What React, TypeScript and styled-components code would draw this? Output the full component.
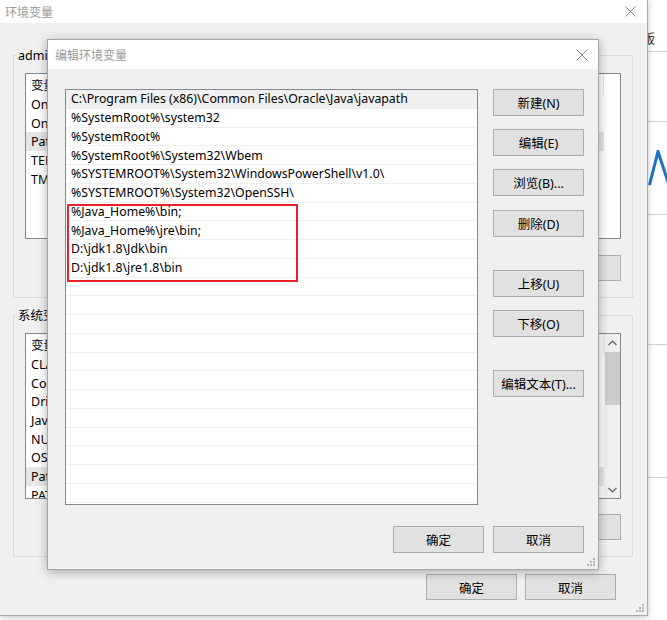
import React from "react";
import styled, { createGlobalStyle } from "styled-components";

// Data --------------------------------------------------------------------------

const pathEntries: string[] = [
  "C:\\Program Files (x86)\\Common Files\\Oracle\\Java\\javapath",
  "%SystemRoot%\\system32",
  "%SystemRoot%",
  "%SystemRoot%\\System32\\Wbem",
  "%SYSTEMROOT%\\System32\\WindowsPowerShell\\v1.0\\",
  "%SYSTEMROOT%\\System32\\OpenSSH\\",
  "%Java_Home%\\bin;",
  "%Java_Home%\\jre\\bin;",
  "D:\\jdk1.8\\Jdk\\bin",
  "D:\\jdk1.8\\jre1.8\\bin",
];

const userVars = [
  { name: "OneDrive", value: "C:\\Users\\admin\\OneDrive" },
  { name: "OneDriveConsumer", value: "C:\\Users\\admin\\OneDrive" },
  { name: "Path", value: "%USERPROFILE%\\AppData\\Local\\Microsoft" },
  { name: "TEMP", value: "%USERPROFILE%\\AppData\\Local\\Temp" },
  { name: "TMP", value: "%USERPROFILE%\\AppData\\Local\\Temp" },
];

const systemVars = [
  { name: "CLASSPATH", value: ".;%Java_Home%\\bin;" },
  { name: "ComSpec", value: "C:\\Windows\\system32\\cmd.exe" },
  { name: "DriverData", value: "C:\\Windows\\System32\\Drivers" },
  { name: "Java_Home", value: "D:\\jdk1.8\\Jdk" },
  { name: "NUMBER_OF_PROCESSORS", value: "8" },
  { name: "OS", value: "Windows_NT" },
  { name: "Path", value: "C:\\Program Files (x86)\\Common Files" },
  { name: "PATHEXT", value: ".COM;.EXE;.BAT;.CMD;.VBS" },
  { name: "PROCESSOR_ARCHITECTURE", value: "AMD64" },
];

// Icons -------------------------------------------------------------------------

const CloseIcon: React.FC<{ size: number }> = ({ size }) => (
  <svg width={size} height={size} viewBox={`0 0 ${size} ${size}`}>
    <path
      d={`M0.5 0.5 L${size - 0.5} ${size - 0.5} M${size - 0.5} 0.5 L0.5 ${size - 0.5}`}
      stroke="#8a8a8a"
      strokeWidth="1"
      fill="none"
    />
  </svg>
);

const Grip: React.FC = () => (
  <svg width="8" height="8" viewBox="0 0 8 8">
    {[
      [6, 0],
      [3, 3],
      [6, 3],
      [0, 6],
      [3, 6],
      [6, 6],
    ].map(([x, y]) => (
      <rect key={`${x}-${y}`} x={x} y={y} width="2" height="2" fill="#b4b4b4" />
    ))}
  </svg>
);

const Chevron: React.FC<{ up?: boolean }> = ({ up }) => (
  <svg width="9" height="6" viewBox="0 0 9 6">
    <polyline
      points={up ? "0.5,5 4.5,1 8.5,5" : "0.5,1 4.5,5 8.5,1"}
      stroke="#606060"
      strokeWidth="1.2"
      fill="none"
    />
  </svg>
);

// Component ---------------------------------------------------------------------

const VarList: React.FC<{
  rows: { name: string; value: string }[];
  selected: number;
  scroll?: boolean;
}> = ({ rows, selected, scroll }) => (
  <ListView>
    <ListBody>
      <HeaderRow>
        <NameCell>变量</NameCell>
        <ValueCell $header>值</ValueCell>
      </HeaderRow>
      {rows.map((row, i) => (
        <VarRow key={row.name + i} $selected={i === selected}>
          <NameCell>{row.name}</NameCell>
          <ValueCell>{row.value}</ValueCell>
        </VarRow>
      ))}
    </ListBody>
    {scroll && (
      <ScrollBar>
        <ScrollArrow>
          <Chevron up />
        </ScrollArrow>
        <ScrollTrack>
          <ScrollThumb />
        </ScrollTrack>
        <ScrollArrow>
          <Chevron />
        </ScrollArrow>
      </ScrollBar>
    )}
  </ListView>
);

const App: React.FC = () => {
  const emptyRows = 22 - pathEntries.length;

  return (
    <>
      <GlobalStyle />
      <Desktop>
        <BackWindow>
          <TitleBar $height={23}>
            <Title>环境变量</Title>
            <CloseIcon size={11} />
          </TitleBar>
          <WindowBody>
            <Group>
              <Legend>administrator 的用户变量(U)</Legend>
              <VarList rows={userVars} selected={2} />
              <ButtonRow $top={16}>
                <Button $w={91} $h={26}>新建(N)...</Button>
                <Button $w={91} $h={26}>编辑(E)...</Button>
                <Button $w={91} $h={26}>删除(D)</Button>
              </ButtonRow>
            </Group>
            <Group $top={17}>
              <Legend>系统变量(S)</Legend>
              <VarList rows={systemVars} selected={6} scroll />
              <ButtonRow $top={15}>
                <Button $w={91} $h={26}>新建(W)...</Button>
                <Button $w={91} $h={26}>编辑(I)...</Button>
                <Button $w={91} $h={26}>删除(L)</Button>
              </ButtonRow>
            </Group>
            <WindowFooter>
              <Button $w={91} $h={26}>确定</Button>
              <Button $w={91} $h={26}>取消</Button>
            </WindowFooter>
          </WindowBody>
          <GripCorner>
            <Grip />
          </GripCorner>
        </BackWindow>

        <SideStrip>
          <StripBlock $h={52} $pad={30}>
            <StripText>版</StripText>
          </StripBlock>
          <StripBlock $h={70} />
          <StripBlock $h={93} $pad={28}>
            <svg width="20" height="36" viewBox="0 0 20 36">
              <polyline
                points="1.5,35 10,1.5 21,35"
                stroke="#1a73c8"
                strokeWidth="3"
                fill="none"
              />
            </svg>
          </StripBlock>
          <StripBlock $h={130} />
          <StripBlock $h={133} />
        </SideStrip>

        <Dialog>
          <TitleBar $height={29}>
            <Title>编辑环境变量</Title>
            <CloseIcon size={12} />
          </TitleBar>
          <DialogBody>
            <DialogMain>
              <PathList>
                {pathEntries.map((entry, i) => (
                  <PathRow key={entry} $first={i === 0}>
                    {entry}
                  </PathRow>
                ))}
                {Array.from({ length: emptyRows }).map((_, i) => (
                  <PathRow key={"empty" + i} />
                ))}
                <Highlight />
              </PathList>
              <ButtonColumn>
                <Button $w={91} $h={27}>新建(N)</Button>
                <Button $w={91} $h={27} $top={13}>编辑(E)</Button>
                <Button $w={91} $h={27} $top={13}>浏览(B)...</Button>
                <Button $w={91} $h={27} $top={14}>删除(D)</Button>
                <Button $w={91} $h={27} $top={33}>上移(U)</Button>
                <Button $w={91} $h={27} $top={13}>下移(O)</Button>
                <Button $w={91} $h={27} $top={33}>编辑文本(T)...</Button>
              </ButtonColumn>
            </DialogMain>
            <DialogFooter>
              <Button $w={91} $h={27}>确定</Button>
              <Button $w={91} $h={27}>取消</Button>
            </DialogFooter>
          </DialogBody>
          <GripCorner>
            <Grip />
          </GripCorner>
        </Dialog>
      </Desktop>
    </>
  );
};

export default App;

// Styled ------------------------------------------------------------------------

const GlobalStyle = createGlobalStyle`
  html, body {
    margin: 0;
    padding: 0;
    background: #ffffff;
  }
  body {
    font-family: "Noto Sans", "Noto Sans CJK SC", sans-serif;
    font-size: 12px;
    color: #000;
    overflow: hidden;
  }
  * { box-sizing: border-box; }
`;

const Desktop = styled.div`
  position: relative;
  width: 667px;
  height: 620px;
  display: flex;
  align-items: flex-start;
  overflow: hidden;
  background: #ffffff;
`;

const BackWindow = styled.div`
  position: relative;
  z-index: 1;
  width: 648px;
  height: 616px;
  flex-shrink: 0;
  background: #f0f0f0;
  border-right: 1px solid #aaaaaa;
  border-bottom: 1px solid #aaaaaa;
  box-shadow: 0 1px 6px rgba(0, 0, 0, 0.25);
  display: flex;
  flex-direction: column;
`;

const TitleBar = styled.div<{ $height: number }>`
  height: ${(p) => p.$height}px;
  flex-shrink: 0;
  background: #ffffff;
  display: flex;
  align-items: center;
  justify-content: space-between;
  padding: 0 11px 0 5px;
  svg {
    display: block;
  }
`;

const Title = styled.div`
  font-family: "Noto Sans CJK SC", sans-serif;
  font-size: 12px;
  color: #9a9a9a;
  line-height: 16px;
`;

const WindowBody = styled.div`
  padding: 32px 14px 0 13px;
  display: flex;
  flex-direction: column;
`;

const Group = styled.div<{ $top?: number }>`
  margin-top: ${(p) => p.$top ?? 0}px;
  border: 1px solid #dcdcdc;
  padding: 0 11px 16px 11px;
  display: flex;
  flex-direction: column;
`;

const Legend = styled.div`
  width: fit-content;
  margin: -8px 0 9px -8px;
  padding: 0 1px;
  background: #f0f0f0;
  line-height: 16px;
  font-size: 12.5px;
  font-family: "Noto Sans", "Noto Sans CJK SC", sans-serif;
`;

const ListView = styled.div`
  height: 166px;
  border: 1px solid #828790;
  background: #ffffff;
  display: flex;
  overflow: hidden;
`;

const ListBody = styled.div`
  flex: 1;
  display: flex;
  flex-direction: column;
`;

const HeaderRow = styled.div`
  height: 21px;
  flex-shrink: 0;
  display: flex;
  align-items: center;
  width: 578px;
`;

const VarRow = styled.div<{ $selected?: boolean }>`
  height: 18.7px;
  flex-shrink: 0;
  display: flex;
  align-items: center;
  width: 578px;
  background: ${(p) => (p.$selected ? "#e6e6e6" : "transparent")};
`;

const NameCell = styled.div`
  width: 150px;
  padding-left: 5px;
  font-size: 12.5px;
  white-space: nowrap;
  overflow: hidden;
`;

const ValueCell = styled.div<{ $header?: boolean }>`
  flex: 1;
  align-self: stretch;
  display: flex;
  align-items: center;
  padding-left: 6px;
  font-size: 12.5px;
  white-space: nowrap;
  overflow: hidden;
  border-right: ${(p) => (p.$header ? "1px solid #e5e5e5" : "none")};
`;

const ScrollBar = styled.div`
  width: 17px;
  flex-shrink: 0;
  background: #f0f0f0;
  display: flex;
  flex-direction: column;
`;

const ScrollArrow = styled.div`
  height: 17px;
  flex-shrink: 0;
  display: flex;
  align-items: center;
  justify-content: center;
`;

const ScrollTrack = styled.div`
  flex: 1;
  padding: 1px 1px 0;
`;

const ScrollThumb = styled.div`
  height: 53px;
  background: #cdcdcd;
`;

const ButtonRow = styled.div<{ $top: number }>`
  margin-top: ${(p) => p.$top}px;
  display: flex;
  justify-content: flex-end;
  gap: 9px;
`;

const Button = styled.div<{ $w: number; $h: number; $top?: number }>`
  width: ${(p) => p.$w}px;
  height: ${(p) => p.$h}px;
  margin-top: ${(p) => p.$top ?? 0}px;
  flex-shrink: 0;
  background: #e1e1e1;
  border: 1px solid #adadad;
  display: flex;
  align-items: center;
  justify-content: center;
  font-family: "Noto Sans", "Noto Sans CJK SC", sans-serif;
  font-size: 12.5px;
  color: #000;
  white-space: nowrap;
`;

const WindowFooter = styled.div`
  margin-top: 17px;
  padding-right: 17px;
  display: flex;
  justify-content: flex-end;
  gap: 8px;
`;

const GripCorner = styled.div`
  position: absolute;
  right: 3px;
  bottom: 3px;
  svg {
    display: block;
  }
`;

const SideStrip = styled.div`
  flex: 1;
  display: flex;
  flex-direction: column;
  overflow: hidden;
`;

const StripBlock = styled.div<{ $h: number; $pad?: number }>`
  height: ${(p) => p.$h}px;
  flex-shrink: 0;
  padding-top: ${(p) => p.$pad ?? 0}px;
  border-bottom: 1px solid #d2d2d2;
  overflow: hidden;
  svg {
    display: block;
  }
`;

const StripText = styled.div`
  font-family: "Noto Sans CJK SC", sans-serif;
  font-size: 13px;
  line-height: 16px;
  color: #333;
  margin-left: -6px;
`;

const Dialog = styled.div`
  position: absolute;
  z-index: 2;
  left: 47px;
  top: 39px;
  width: 552px;
  height: 531px;
  background: #f0f0f0;
  border: 1px solid #a6a6a6;
  box-shadow: 0 2px 10px rgba(0, 0, 0, 0.3);
  display: flex;
  flex-direction: column;
  ${TitleBar} {
    padding: 0 10px 0 7px;
  }
`;

const DialogBody = styled.div`
  padding: 20px 14px 0 17px;
  display: flex;
  flex-direction: column;
`;

const DialogMain = styled.div`
  display: flex;
  gap: 15px;
`;

const PathList = styled.div`
  position: relative;
  width: 413px;
  height: 416px;
  border: 1px solid #828790;
  background: #ffffff;
  display: flex;
  flex-direction: column;
  overflow: hidden;
`;

const PathRow = styled.div<{ $first?: boolean }>`
  height: 18.75px;
  flex-shrink: 0;
  padding-left: 5px;
  display: flex;
  align-items: center;
  border-bottom: 1px solid #f0f0f0;
  background: ${(p) => (p.$first ? "#f0f0f0" : "#ffffff")};
  font-size: 12.3px;
  white-space: nowrap;
`;

const Highlight = styled.div`
  position: absolute;
  left: 1px;
  top: 114px;
  width: 231px;
  height: 78px;
  border: 2px solid #e8202a;
  pointer-events: none;
`;

const ButtonColumn = styled.div`
  display: flex;
  flex-direction: column;
`;

const DialogFooter = styled.div`
  margin-top: 21px;
  display: flex;
  justify-content: flex-end;
  gap: 9px;
`;
